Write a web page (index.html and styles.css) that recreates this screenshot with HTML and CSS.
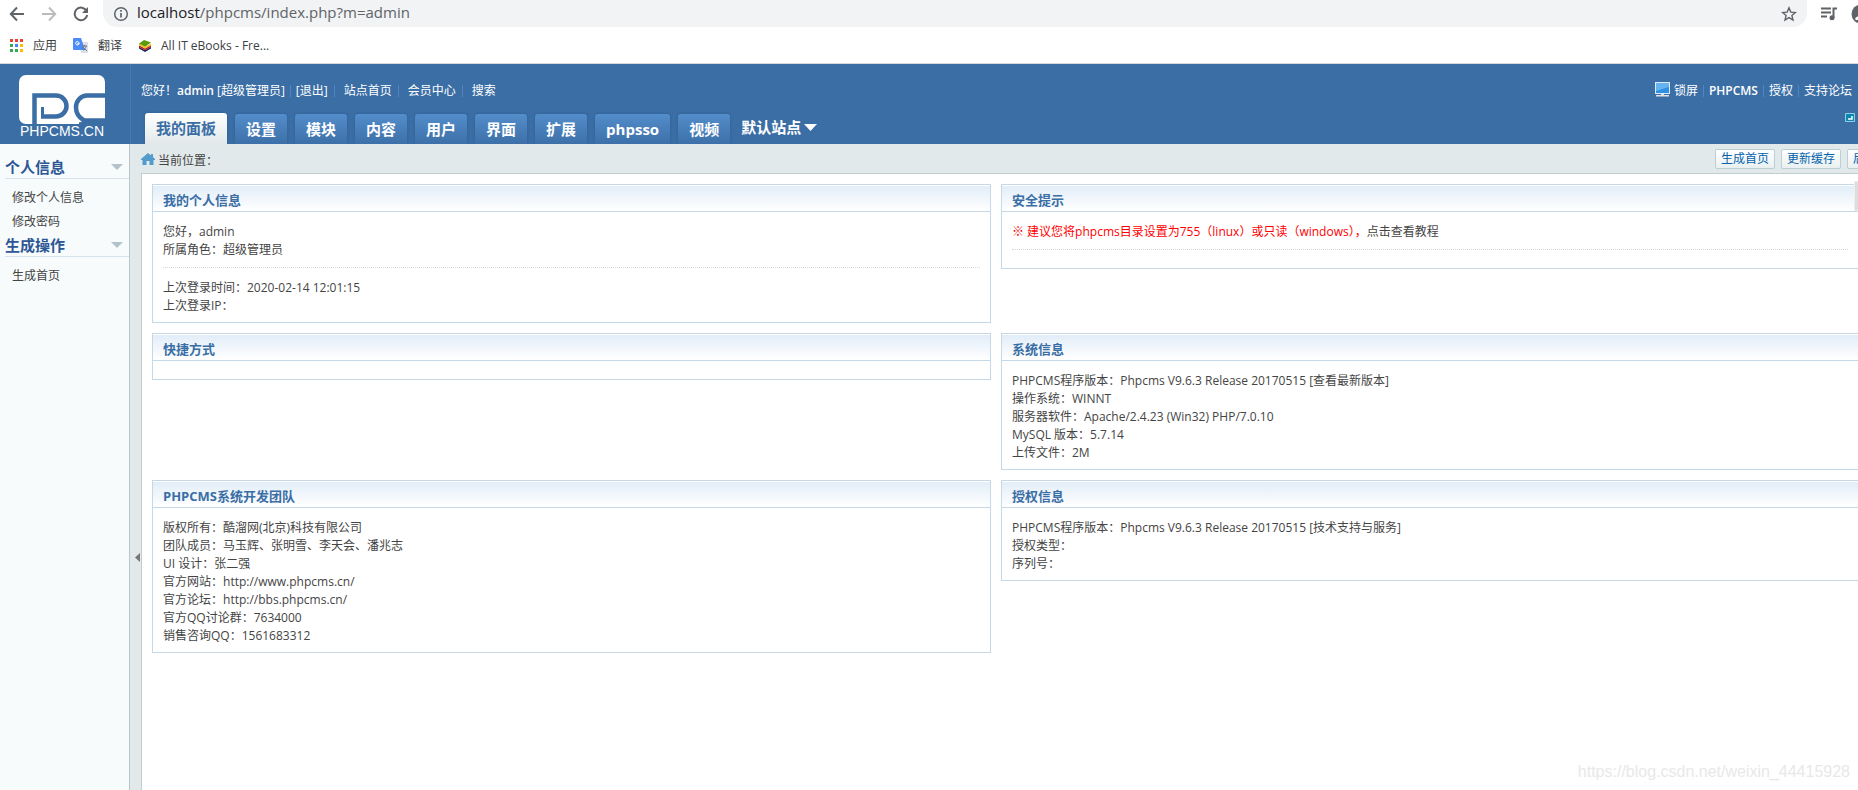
FILE: index.html
```html
<!DOCTYPE html>
<html lang="zh-CN">
<head>
<meta charset="utf-8">
<title>PHPCMS</title>
<link rel="stylesheet" href="styles.css">
</head>
<body>
<div class="browser">
  <div class="toolbar">
    <button class="nav-btn" aria-label="后退"><svg width="16" height="16" viewBox="0 0 16 16"><path d="M15 8H2M8 1.500L1.800 8L8 14.500" fill="none" stroke="#5f6368" stroke-width="2"/></svg></button>
    <button class="nav-btn" aria-label="前进"><svg width="16" height="16" viewBox="0 0 16 16"><path d="M1 8h13M8 1.500L14.200 8L8 14.500" fill="none" stroke="#babcbe" stroke-width="2"/></svg></button>
    <button class="nav-btn" aria-label="刷新"><svg width="16" height="16" viewBox="0 0 16 16"><path d="M13.600 5A6.300 6.300 0 1 0 14.200 9" fill="none" stroke="#5f6368" stroke-width="2"/><path d="M15 1v6H9z" fill="#5f6368"/></svg></button>
    <div class="omnibox">
      <svg width="16" height="16" viewBox="0 0 16 16"><circle cx="8" cy="8" r="6.300" fill="none" stroke="#5f6368" stroke-width="1.500"/><path d="M8 7v4.500M8 4v1.700" stroke="#5f6368" stroke-width="1.700"/></svg>
      <span class="url"><span class="host">localhost</span>/phpcms/index.php?m=admin</span>
      <svg class="star" width="16" height="16" viewBox="0 0 16 16"><path d="M8 1.800l1.800 4.300 4.600.4-3.500 3 1.100 4.500L8 11.600 4 14l1.100-4.500-3.500-3 4.600-.4z" fill="none" stroke="#5f6368" stroke-width="1.400"/></svg>
    </div>
    <svg class="queue" width="16" height="14" viewBox="0 0 16 14"><path d="M0 1.500h10M0 5.500h10M0 9.500h6M12.500 11V1.500H16" fill="none" stroke="#5f6368" stroke-width="2"/><circle cx="11" cy="10.800" r="2.500" fill="#5f6368"/></svg>
    <svg class="avatar" width="7" height="20" viewBox="0 0 7 20"><circle cx="10" cy="10" r="9.500" fill="#5f6368"/><path d="M4 15c1-2 3-3 5-3v4H5z" fill="#fff"/></svg>
  </div>
  <nav class="bookmarks">
    <a href="#"><svg width="14" height="14" viewBox="0 0 14 14"><path d="M0 0h3v3H0zM5 0h3v3H5zM10 0h3v3h-3z" fill="#ea4335"/><path d="M0 5h3v3H0zM0 10h3v3H0zM5 10h3v3H5z" fill="#34a853"/><path d="M5 5h3v3H5z" fill="#4285f4"/><path d="M10 5h3v3h-3zM10 10h3v3h-3z" fill="#fbbc05"/></svg>应用</a>
    <a href="#"><svg width="16" height="16" viewBox="0 0 16 16"><path d="M6 4h9v11H8z" fill="#dcdfe3"/><path d="M1 0h7l4 12H1a1 1 0 0 1-1-1V1a1 1 0 0 1 1-1z" fill="#4c8bf5"/><path d="M7 5.200H4.800v1h1A1.700 1.700 0 1 1 5.500 4" fill="none" stroke="#fff"/><path d="M9 8h5M11.500 7v1M13 8c0 2-2 4-3 4M10 9l4 4" stroke="#697786" fill="none"/></svg>翻译</a>
    <a href="#"><svg width="14" height="12" viewBox="0 0 16 14"><path d="M1 8l7 4 7-4v2l-7 4-7-4z" fill="#14285f"/><path d="M1 6l7 4 7-4v2l-7 4-7-4z" fill="#c5161d"/><path d="M1 4l7 4 7-4v2l-7 4-7-4z" fill="#f3c51b"/><path d="M1 4l6-4 8 3-7 5z" fill="#5c9a10"/></svg>All IT eBooks - Fre...</a>
  </nav>
</div>
<header class="header">
  <div class="brand">
    <svg width="92" height="66" viewBox="0 0 92 66" role="img" aria-label="PHPCMS.CN"><path d="M7 0H79a7 7 0 0 1 7 7V44H66L60 49H7a7 7 0 0 1-7-7V7a7 7 0 0 1 7-7z" fill="#fff"/><path d="M15.500 50V20.500H37a10.500 10.500 0 0 1 0 21H22" fill="none" stroke="#3b6ea5" stroke-width="4.500"/><path d="M23.500 32v8" stroke="#3b6ea5" stroke-width="3"/><path d="M86 20.500H68a11.500 11.500 0 0 0-11 12c0 6 3 10 8 13h21v4H60" fill="none" stroke="#3b6ea5" stroke-width="4.500"/><text x="1" y="61">PHPCMS.CN</text></svg>
  </div>
  <div class="header-main">
    <div class="header-top">
      <div class="links"><span>您好！<b>admin</b> [超级管理员]</span><a href="#" class="logout">[退出]</a><a href="#">站点首页</a><a href="#">会员中心</a><a href="#">搜索</a></div>
      <div class="links quick"><a href="#" class="lock"><svg width="15" height="15" viewBox="0 0 15 15"><path d="M0 0h15v12H0z" fill="#dde9f5"/><path d="M1 1h13v10H1z" fill="#2f8fe0"/><path d="M1 1h13v4L1 9z" fill="#65b3f0"/><path d="M6 12h3v1h5v1.500H1V13h5z" fill="#e3e3e3"/></svg>锁屏</a><a href="#"><b>PHPCMS</b></a><a href="#">授权</a><a href="#">支持论坛</a></div>
    </div>
    <nav class="tabs">
      <a href="#" class="active">我的面板</a><a href="#">设置</a><a href="#">模块</a><a href="#">内容</a><a href="#">用户</a><a href="#">界面</a><a href="#">扩展</a><a href="#">phpsso</a><a href="#">视频</a>
      <button class="site">默认站点<svg width="13" height="7" viewBox="0 0 13 7"><path d="M0 0h13L6.500 7z" fill="#fff"/></svg></button>
      <button class="full" aria-label="全屏"><svg width="10" height="9" viewBox="0 0 10 9"><path d="M.5.500h9v8h-9z" fill="#0d87ad" stroke="#8fd0e6"/><path d="M3 6h4V3" fill="none" stroke="#fff" stroke-width="1.500"/></svg></button>
    </nav>
  </div>
</header>
<div class="body">
  <aside class="sidebar">
    <h3>个人信息<i class="arrow"></i></h3>
    <ul><li><a href="#">修改个人信息</a></li><li><a href="#">修改密码</a></li></ul>
    <h3>生成操作<i class="arrow"></i></h3>
    <ul><li><a href="#">生成首页</a></li></ul>
  </aside>
  <button class="handle" aria-label="收起侧栏"><svg width="5" height="9" viewBox="0 0 5 9"><path d="M5 0v9L0 4.500z" fill="#777"/></svg></button>
  <div class="workspace">
    <div class="crumbs">
      <svg width="14" height="12" viewBox="0 0 14 12"><path d="M7 0l3 2.500V1h2v3l2 2v1h-1.500v5H8.500V8h-3v4h-4V7H0V6z" fill="#529bcb"/></svg>
      <span class="where">当前位置：</span>
      <div class="actions"><button>生成首页</button><button>更新缓存</button><button>后台首页</button></div>
    </div>
    <main class="content">
      <section class="panel"><h6>我的个人信息</h6><div class="info">您好，admin<br>所属角色：超级管理员<hr>上次登录时间：2020-02-14 12:01:15<br>上次登录IP：</div></section>
      <section class="panel"><h6>安全提示</h6><div class="info"><span class="warn">※ 建议您将phpcms目录设置为755（linux）或只读（windows），</span><a href="#">点击查看教程</a><hr></div></section>
      <section class="panel"><h6>快捷方式</h6><div class="info"></div></section>
      <section class="panel"><h6>系统信息</h6><div class="info">PHPCMS程序版本：Phpcms V9.6.3 Release 20170515 <a href="#">[查看最新版本]</a><br>操作系统：WINNT<br>服务器软件：Apache/2.4.23 (Win32) PHP/7.0.10<br>MySQL 版本：5.7.14<br>上传文件：2M</div></section>
      <section class="panel"><h6>PHPCMS系统开发团队</h6><div class="info">版权所有：酷溜网(北京)科技有限公司<br>团队成员：马玉辉、张明雪、李天会、潘兆志<br>UI 设计：张二强<br>官方网站：<a href="#">http://www.phpcms.cn/</a><br>官方论坛：<a href="#">http://bbs.phpcms.cn/</a><br>官方QQ讨论群：7634000<br>销售咨询QQ：1561683312</div></section>
      <section class="panel"><h6>授权信息</h6><div class="info">PHPCMS程序版本：Phpcms V9.6.3 Release 20170515 <a href="#">[技术支持与服务]</a><br>授权类型：<br>序列号：</div></section>
    </main>
    <i class="scroll-thumb"></i>
  </div>
</div>
<div class="watermark">https://blog.csdn.net/weixin_44415928</div>
</body>
</html>
```
FILE: styles.css
```css
* { box-sizing: border-box; }
body {
  margin: 0;
  height: 100vh;
  display: flex;
  flex-direction: column;
  overflow: hidden;
  position: relative;
  background: #fff;
  color: #444;
  font: 12px/18px "Open Sans", "Noto Sans CJK SC", sans-serif;
}
a { color: inherit; text-decoration: none; }
b { font-weight: 600; }
button { font: inherit; border: 0; padding: 0; background: none; color: inherit; }
svg { display: block; flex: none; }

.browser { background: #fff; border-bottom: 1px solid #d5d8dc; }
.toolbar { display: flex; align-items: center; height: 27px; padding-left: 9px; }
.nav-btn { width: 32px; flex: none; }
.omnibox {
  flex: 1;
  display: flex;
  align-items: center;
  height: 27px;
  margin-left: -2px;
  padding: 0 10px;
  border-radius: 0 0 14px 14px;
  background: #f1f3f4;
}
.url { margin-left: 8px; padding-bottom: 3px; font-size: 15px; color: #5f6368; }
.host { color: #202124; }
.star { margin-left: auto; }
.queue { margin: 0 14px; }
.bookmarks { display: flex; align-items: center; height: 36px; padding: 1px 0 0 10px; color: #3c4043; }
.bookmarks a { display: flex; align-items: center; gap: 9px; margin-right: 16px; }

.header {
  display: flex;
  height: 80px;
  background: #3b6ea5;
  color: #fff;
}
.brand { width: 131px; padding: 11px 0 0 19px; border-right: 1px solid #4779b0; }
.brand text { font: 14px "Liberation Sans", sans-serif; fill: #fff; }
.header-main { flex: 1; display: flex; flex-direction: column; justify-content: space-between; min-width: 0; }
.header-top { display: flex; justify-content: space-between; padding: 18px 6px 0 10px; }
.links { display: flex; align-items: center; }
.links > * + * { display: flex; align-items: center; }
.links > * + *::before { content: ""; width: 1px; height: 12px; margin: 0 9px 0 6px; background: #4d86c0; }
.links .logout::before, .quick > * + *::before { margin: 0 5px; }
.lock { display: flex; gap: 4px; }
.tabs { display: flex; align-items: flex-end; gap: 8px; padding-left: 14px; font-size: 15px; font-weight: bold; }
.tabs a {
  height: 30px;
  padding: 0 11px;
  line-height: 30px;
  border-radius: 3px 3px 0 0;
  background: linear-gradient(#538dcb, #3d70a8);
  box-shadow: 0 0 3px #2f5f94;
}
.tabs .active { height: 31px; background: linear-gradient(#fff, #e2e9ea); color: #3b6ea5; }
.site { display: flex; align-items: center; gap: 3px; height: 34px; padding-left: 3px; }
.full { margin: 3px 3px 0 auto; align-self: flex-start; }

.body { flex: 1; display: flex; min-height: 0; background: #e2e9ea; }
.sidebar { width: 130px; padding-top: 11px; border-right: 1px solid #b9c5cb; background: #f7fbfc; }
.sidebar h3 {
  display: flex;
  align-items: center;
  justify-content: space-between;
  height: 24px;
  margin: 0 0 0 5px;
  padding-right: 6px;
  border-bottom: 1px solid #d6e2ec;
  font-size: 15px;
  line-height: 22px;
  color: #2d5795;
}
.arrow { border: 6px solid transparent; border-top-color: #b2c3ca; border-bottom: 0; }
.sidebar ul { margin: 0; padding: 7px 0 0 12px; list-style: none; line-height: 24px; }
.sidebar ul + h3 { margin-top: -1px; }
.handle { display: flex; align-items: center; justify-content: flex-end; width: 11px; padding: 180px 1px 0 0; }
.workspace { flex: 1; display: flex; flex-direction: column; min-width: 0; position: relative; }
.crumbs { display: flex; align-items: center; gap: 3px; height: 29px; overflow: hidden; }
.where { padding-top: 4px; }
.actions { display: flex; gap: 6px; margin: 0 -49px 0 auto; }
.actions button {
  height: 20px;
  padding: 0 5px;
  border: 1px solid #bccfd6;
  border-radius: 2px;
  background: linear-gradient(#fff, #eaf0f1);
  color: #0563ad;
}
.content {
  flex: 1;
  display: grid;
  grid-template-columns: 839fr 857fr;
  align-content: start;
  align-items: start;
  gap: 10px;
  padding: 10px 0 0 10px;
  border-top: 1px solid #c2cdd0;
  border-left: 1px solid #c2cdd0;
  background: #fff;
}
.panel { border: 1px solid #c5d8e8; }
.panel:nth-child(even) { border-right: 0; }
.panel h6 {
  margin: 0;
  height: 27px;
  padding: 0 10px;
  border-top: 1px solid #fff;
  border-bottom: 1px solid #c5d8e8;
  background: linear-gradient(#e2edf8, #fff);
  font-size: 13px;
  line-height: 28px;
  color: #3a6ea5;
}
.info { padding: 11px 10px 7px; }
.info hr { height: 1px; margin: 8px 0 11px; border: 0; border-top: 1px dotted #d8d8d8; }
.warn { color: #f00; }
.scroll-thumb { position: absolute; top: 37px; right: 0; width: 4px; height: 30px; border: 1px solid #eee; border-right: 0; background: #ddd; }
.watermark { position: absolute; right: 8px; bottom: 8px; font: 16px/20px "Liberation Sans", sans-serif; color: #e8e8e8; }
```
